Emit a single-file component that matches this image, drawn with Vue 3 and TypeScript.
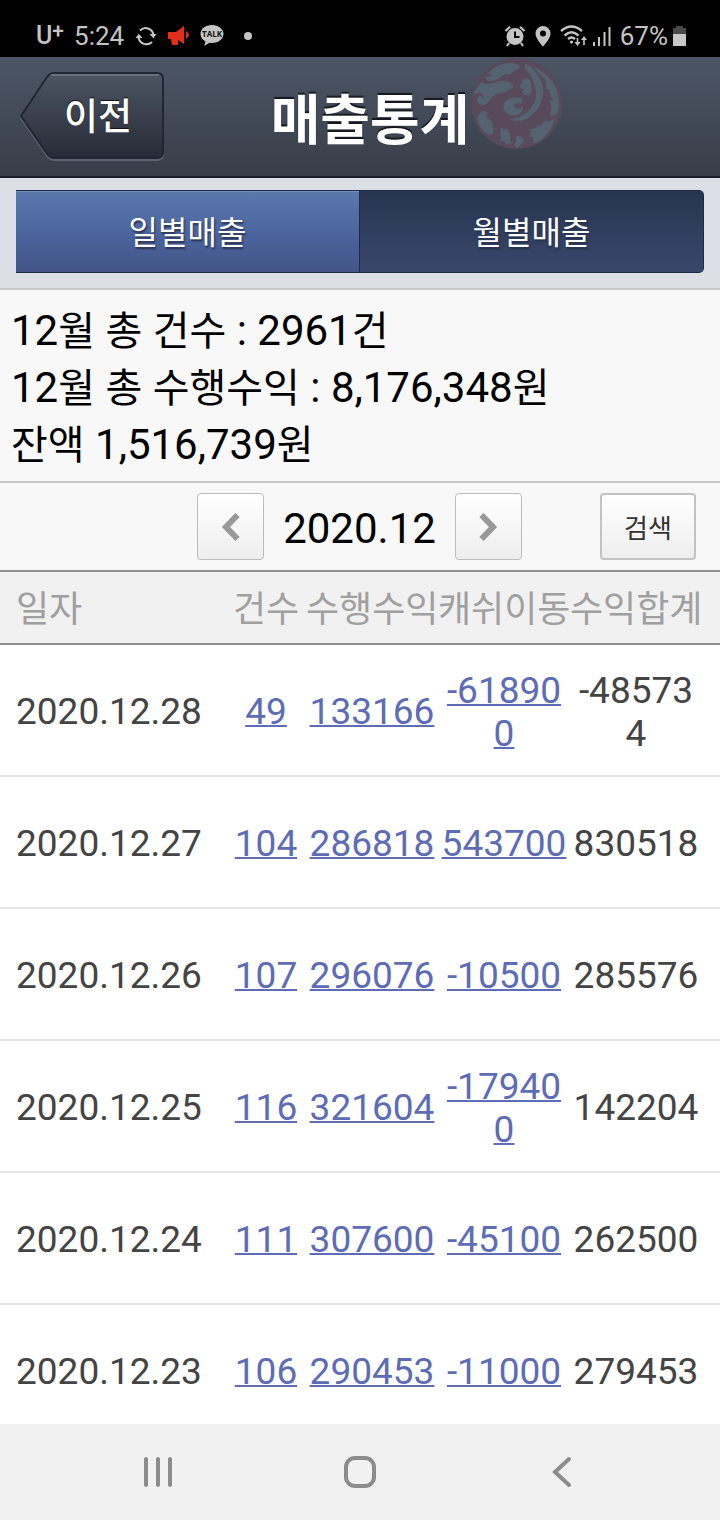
<script setup lang="ts">
import { ref } from 'vue'

interface SalesRow {
  date: string
  count: number
  profit: number
  cash: number
  total: number
}

interface Run {
  text: string
  hangul: boolean
}

const rows: SalesRow[] = [
  { date: '2020.12.28', count: 49, profit: 133166, cash: -618900, total: -485734 },
  { date: '2020.12.27', count: 104, profit: 286818, cash: 543700, total: 830518 },
  { date: '2020.12.26', count: 107, profit: 296076, cash: -10500, total: 285576 },
  { date: '2020.12.25', count: 116, profit: 321604, cash: -179400, total: 142204 },
  { date: '2020.12.24', count: 111, profit: 307600, cash: -45100, total: 262500 },
  { date: '2020.12.23', count: 106, profit: 290453, cash: -11000, total: 279453 },
]

const summary: string[] = [
  '12월 총 건수 : 2961건',
  '12월 총 수행수익 : 8,176,348원',
  '잔액 1,516,739원',
]

const tabs: string[] = ['일별매출', '월별매출']
const activeTab = ref(0)

const month = ref(new Date(2020, 11, 1))
const monthLabel = (d: Date): string =>
  `${d.getFullYear()}.${String(d.getMonth() + 1).padStart(2, '0')}`
const shiftMonth = (step: number): void => {
  month.value = new Date(month.value.getFullYear(), month.value.getMonth() + step, 1)
}

const splitRuns = (line: string): Run[] =>
  (line.match(/[가-힣]+|[^가-힣]+/g) ?? []).map((text) => ({
    text,
    hangul: /[가-힣]/.test(text),
  }))
</script>

<template>
  <div class="screen">
    <div class="status">
      <div class="status-group">
        <span class="carrier">U<span class="plus">+</span></span>
        <span class="clock">5:24</span>
        <svg class="i-sync" width="22" height="22" viewBox="0 0 22 22" fill="none" stroke="#c4c4c4" stroke-width="2">
          <path d="M5 5.5A8 8 0 0 1 18.500 9.500" />
          <path d="M17 17A8 8 0 0 1 3.500 12.500" />
          <path d="M14.500 9h7l-3.200 4.200zM.5 13h7L3.800 8.800z" fill="#c4c4c4" stroke="none" />
        </svg>
        <svg class="i-horn" width="22" height="22" viewBox="0 0 22 22" fill="#e0301a">
          <path d="M0 7h8L16 1v18l-6-4v5H4l-1-6H0z" />
          <path d="M18 6q6 4 0 8z" />
        </svg>
        <svg class="i-talk" width="24" height="24" viewBox="0 0 24 24">
          <path d="M12 1C5.500 1 .5 4.800.5 10c0 3.300 2 6 5 7.400L4.300 22l5.200-3.300c.8.200 1.600.2 2.500.2 6.500 0 11.500-3.900 11.500-8.900S18.500 1 12 1z" fill="#c4c4c4" />
          <text x="12" y="13" text-anchor="middle" class="talk-text">TALK</text>
        </svg>
        <span class="dot"></span>
      </div>
      <div class="status-group">
        <svg width="22" height="22" viewBox="0 0 22 22">
          <circle cx="11" cy="11.500" r="8.500" fill="#c4c4c4" />
          <path d="M1.500 6 6 1.800M20.500 6 16 1.800M5 18l-2 3M17 18l2 3" fill="none" stroke="#c4c4c4" stroke-width="2.200" />
          <path d="M11 6.500V12h4.500" fill="none" stroke="#000" stroke-width="2" />
        </svg>
        <svg class="i-pin" width="16" height="22" viewBox="0 0 16 22">
          <path d="M8 1a7.500 7.500 0 0 0-7.500 7.500C.5 14 8 21.500 8 21.500s7.500-7.500 7.500-13A7.500 7.500 0 0 0 8 1zm0 4.500a3 3 0 1 1 0 6 3 3 0 0 1 0-6z" fill="#c4c4c4" />
        </svg>
        <svg class="i-wifi" width="28" height="22" viewBox="0 0 28 22" fill="none" stroke="#c4c4c4" stroke-width="2.400">
          <path d="M1 6q10.500-9 21 0M4.500 10.500q7-6.500 14 0M8 14q3.500-3 7 0" />
          <circle cx="11.500" cy="17" r="1.600" fill="#c4c4c4" stroke="none" />
          <path d="M17.500 13v6M24 20v-6" stroke-width="1.600" />
          <path d="M14.500 17h6l-3 4zM21 15h6l-3-4z" fill="#c4c4c4" stroke="none" />
        </svg>
        <svg class="i-signal" width="18" height="22" viewBox="0 0 18 22" fill="#c4c4c4">
          <path d="M0 17h2v4H0zM5 12h2v9H5zM10.500 7h2v14h-2zM15.500 2h2v19h-2z" />
        </svg>
        <span class="percent">67%</span>
        <svg class="i-battery" width="14" height="22" viewBox="0 0 14 22">
          <path d="M3 1h7v2h3v6H0V3h3z" fill="#4a4a4a" />
          <path d="M0 9h13v12H0z" fill="#c8c8c8" />
        </svg>
      </div>
    </div>

    <header class="titlebar">
      <button class="back" type="button">
        <svg class="back-shape" width="146" height="92" viewBox="0 0 146 92" aria-hidden="true">
          <defs>
            <linearGradient id="backFill" x1="0" y1="0" x2="0" y2="1">
              <stop offset="0" stop-color="#4c5562" />
              <stop offset="0.5" stop-color="#3a404d" />
              <stop offset="1" stop-color="#282b37" />
            </linearGradient>
          </defs>
          <path d="M1 47 27 8Q30 4 35 4H137Q143 4 143 10V83Q143 89 137 89H35Q30 89 27 85Z" fill="none" stroke="#5a636f" stroke-width="2" />
          <path d="M1 45 27 6Q30 2 35 2H137Q143 2 143 8V81Q143 87 137 87H35Q30 87 27 83Z" fill="url(#backFill)" stroke="#202733" stroke-width="2" />
          <path d="M31 4H139" stroke="#67717d" stroke-width="2" />
        </svg>
        <span class="back-label">이전</span>
      </button>
      <h1 class="title">매출통계</h1>
      <svg class="emblem" width="94" height="92" viewBox="210 21 282 276" aria-hidden="true">
        <circle cx="353" cy="161" r="136" fill="#594a5b" />
        <g fill="#55626f">
          <path d="M262 73Q298 36 340 38Q365 43 364 54Q350 57 334 73Q313 71 302 83Q290 93 274 94Q258 90 258 79Q272 84 278 77Q276 67 262 73Z" />
          <path d="M249 96Q269 108 294 96Q313 87 337 99Q347 104 340 113Q319 129 293 131Q275 142 265 159Q252 170 237 160Q230 146 240 137Q250 136 250 147Q257 138 247 129Q234 125 223 137Q228 115 249 96Z" />
          <path d="M369 91Q389 77 397 101Q400 120 393 133Q384 142 370 130Q364 124 376 119Q365 116 362 108Q372 103 369 91Z" />
          <path d="M380 41Q406 53 418 79Q439 110 430 146Q419 185 383 207Q357 218 330 209Q370 203 394 178Q419 145 408 111Q399 72 374 52Z" />
          <path d="M403 49Q450 71 471 113Q485 147 478 184Q470 202 452 196Q463 176 451 152L463 149Q449 132 452 119L440 116Q447 88 424 76Z" />
          <path d="M318 155Q335 138 363 143Q378 150 365 161Q346 157 345 169Q352 180 371 170Q375 183 358 194Q329 204 316 181Q311 166 318 155Z" />
          <path d="M247 185Q265 178 266 194Q258 203 273 209Q286 224 282 251Q265 259 252 240Q236 223 235 202Z" />
          <path d="M305 232Q313 241 323 235Q336 251 334 270L340 280L323 283L313 272L301 276Q309 260 303 247Z" />
          <path d="M351 262Q355 255 369 260Q378 272 365 284L354 294L344 285Q355 276 351 262Z" />
          <path d="M391 239Q421 231 438 212Q446 218 468 205Q455 251 420 273Q409 281 401 278Q409 263 391 258Q400 249 391 239Z" />
        </g>
        <path d="M327 80q6 1 5 7-4 5-9 0 0-5 4-7" fill="none" stroke="#594a5b" stroke-width="3" />
      </svg>
    </header>

    <main class="content">
      <nav class="tabs" aria-label="매출 구분">
        <button
          v-for="(tab, i) in tabs"
          :key="tab"
          type="button"
          class="tab"
          :class="{ active: activeTab === i }"
          @click="activeTab = i"
        >{{ tab }}</button>
      </nav>

      <section class="summary">
        <p v-for="line in summary" :key="line" class="summary-line"><span v-for="(run, i) in splitRuns(line)" :key="i" :class="{ hangul: run.hangul }">{{ run.text }}</span></p>
      </section>

      <section class="picker">
        <div class="stepper">
          <button type="button" class="step" aria-label="이전 달" @click="shiftMonth(-1)">
            <svg width="20" height="30" viewBox="0 0 20 30"><path d="M16.500 3 5 15l11.500 12" fill="none" stroke="#999" stroke-width="6" /></svg>
          </button>
          <span class="month">{{ monthLabel(month) }}</span>
          <button type="button" class="step" aria-label="다음 달" @click="shiftMonth(1)">
            <svg width="20" height="30" viewBox="0 0 20 30"><path d="M3.500 3 15 15 3.500 27" fill="none" stroke="#999" stroke-width="6" /></svg>
          </button>
        </div>
        <button type="button" class="search">검색</button>
      </section>

      <table class="sales">
        <colgroup>
          <col />
          <col class="col-count" />
          <col class="col-money" />
          <col class="col-money" />
          <col class="col-last" />
        </colgroup>
        <thead>
          <tr>
            <th scope="col">일자</th>
            <th scope="col">건수</th>
            <th scope="col">수행수익</th>
            <th scope="col">캐쉬이동</th>
            <th scope="col">수익합계</th>
          </tr>
        </thead>
        <tbody>
          <tr v-for="row in rows" :key="row.date">
            <td>{{ row.date }}</td>
            <td><a href="#">{{ row.count }}</a></td>
            <td><a href="#">{{ row.profit }}</a></td>
            <td><a href="#">{{ row.cash }}</a></td>
            <td>{{ row.total }}</td>
          </tr>
        </tbody>
      </table>
    </main>

    <nav class="softkeys" aria-label="시스템">
      <button type="button" class="key" aria-label="최근 앱">
        <svg width="32" height="32" viewBox="0 0 32 32"><path d="M4 3v26M16 3v26M28 3v26" stroke="#8c8c8c" stroke-width="4" stroke-linecap="round" /></svg>
      </button>
      <button type="button" class="key" aria-label="홈">
        <svg width="32" height="32" viewBox="0 0 32 32"><rect x="2" y="2" width="28" height="28" rx="9" fill="none" stroke="#8c8c8c" stroke-width="4" /></svg>
      </button>
      <button type="button" class="key" aria-label="뒤로">
        <svg width="32" height="32" viewBox="0 0 32 32"><path d="M23 3 9 16l14 13" fill="none" stroke="#8c8c8c" stroke-width="4" stroke-linecap="round" /></svg>
      </button>
    </nav>
  </div>
</template>

<style>
body {
  margin: 0;
  background: #fff;
}
</style>

<style scoped>
* {
  box-sizing: border-box;
}

.screen {
  display: flex;
  flex-direction: column;
  height: 100vh;
  overflow: hidden;
  font-family: Roboto, "Noto Sans CJK KR", sans-serif;
  color: #444;
}

button {
  font-family: inherit;
  padding: 0;
  cursor: pointer;
}

svg {
  display: block;
  flex: none;
}

.status {
  display: flex;
  justify-content: space-between;
  flex: none;
  height: 57px;
  padding: 14px 33px 0 36px;
  background: #000;
  color: #c4c4c4;
  font-size: 26px;
  line-height: 44px;
}

.status-group {
  display: flex;
  align-items: center;
}

.carrier {
  font-size: 25px;
  font-weight: 500;
}

.plus {
  font-size: 21px;
  font-weight: 500;
  vertical-align: 6px;
  line-height: 1;
}

.clock {
  margin-left: 10px;
}

.i-sync {
  margin-left: 11px;
}

.i-horn {
  margin-left: 11px;
}

.i-talk {
  margin-left: 10px;
}

.talk-text {
  font: 700 8px "Open Sans", sans-serif;
  fill: #111;
}

.dot {
  width: 8px;
  height: 8px;
  margin-left: 20px;
  border-radius: 50%;
  background: #c4c4c4;
}

.i-pin {
  margin-left: 9px;
}

.i-wifi {
  margin-left: 9px;
}

.i-signal {
  margin-left: 5px;
}

.percent {
  margin-left: 9px;
}

.i-battery {
  margin-left: 5px;
}

.titlebar {
  display: grid;
  grid-template-columns: 1fr auto 1fr;
  align-items: center;
  flex: none;
  height: 121px;
  padding-left: 20px;
  border-bottom: 2px solid #1c1d28;
  background: linear-gradient(#4c5565, #424a57 50%, #373d48);
}

.back {
  position: relative;
  width: 146px;
  height: 92px;
  border: 0;
  background: none;
}

.back-shape {
  position: absolute;
  inset: 0;
}

.back-label {
  position: relative;
  display: block;
  padding: 2px 0 0 10px;
  color: #fff;
  font-size: 37px;
  font-weight: 500;
  line-height: 54px;
  text-shadow: 0 -1px 1px #111;
}

.title {
  margin: 0;
  padding-top: 10px;
  color: #fff;
  font-size: 54px;
  font-weight: 700;
  line-height: 80px;
  text-shadow: 0 -2px 1px #15181f;
}

.emblem {
  align-self: start;
}

.content {
  flex: 1;
  min-height: 0;
  overflow-y: auto;
  scrollbar-width: none;
}

.tabs {
  display: flex;
  height: 112px;
  padding: 12px 16px 15px;
  border-bottom: 2px solid #c8c8c8;
  background: #dce0e6;
}

.tab {
  flex: 1;
  height: 83px;
  padding-bottom: 4px;
  border: 1px solid #1e2b47;
  border-left: 0;
  background: linear-gradient(#27344f, #39476c);
  color: #fff;
  font-size: 32px;
  font-weight: 400;
  text-shadow: 1px 2px 2px #26304d;
}

.tab.active {
  background: linear-gradient(#5b78ad, #4b649d 55%, #425488);
  box-shadow: inset 0 1px #7590bd;
}

.tab:last-child {
  border-radius: 0 5px 5px 0;
}

.summary {
  padding: 12px 11px 8px;
  border-bottom: 2px solid #c6c6c6;
  background: #f8f8f8;
  color: #000;
}

.summary-line {
  margin: 0;
  font-size: 42px;
  line-height: 57px;
  white-space: pre-wrap;
}

.hangul {
  font-size: 40px;
  line-height: 1;
}

.picker {
  display: grid;
  grid-template-columns: 1fr auto 1fr;
  align-items: center;
  height: 89px;
  padding: 0 24px 0 23px;
  border-bottom: 2px solid #909090;
  background: #f8f8f8;
}

.stepper {
  display: flex;
  align-items: center;
  gap: 19px;
  grid-column: 2;
}

.step {
  display: flex;
  align-items: center;
  justify-content: center;
  width: 67px;
  height: 67px;
  border: 1px solid #bcbcbc;
  border-radius: 4px;
  background: linear-gradient(#fff, #eee);
}

.month {
  padding-top: 4px;
  color: #000;
  font-size: 42px;
  line-height: 56px;
}

.search {
  justify-self: end;
  width: 96px;
  height: 67px;
  border: 2px solid #c3c3c3;
  border-radius: 4px;
  background: linear-gradient(#fff, #eee);
  color: #333;
  font-size: 26px;
}

.sales {
  width: 100%;
  table-layout: fixed;
  border-collapse: separate;
  border-spacing: 0;
  font-size: 37px;
  line-height: 43px;
}

.col-count {
  width: 80px;
}

.col-money {
  width: 132px;
}

.col-last {
  width: 150px;
}

th,
td {
  padding: 0;
  text-align: center;
  vertical-align: middle;
}

th:first-child,
td:first-child {
  padding-left: 16px;
  text-align: left;
}

th:last-child,
td:last-child {
  padding-right: 18px;
}

th {
  height: 73px;
  padding-top: 6px;
  border-bottom: 2px solid #909090;
  background: #f1f1f1;
  color: #a0a0a0;
  font-size: 36px;
  font-weight: 400;
  white-space: nowrap;
}

td {
  height: 132px;
  padding-top: 3px;
  border-bottom: 2px solid #e6e6e6;
  background: #fff;
  word-break: break-all;
}

a {
  color: #5d6cb5;
  text-decoration: underline;
  text-decoration-thickness: 2px;
}

.softkeys {
  display: flex;
  justify-content: space-around;
  align-items: center;
  flex: none;
  height: 96px;
  padding: 0 57px;
  background: #f1f1f1;
}

.key {
  display: flex;
  align-items: center;
  justify-content: center;
  flex: 1;
  height: 96px;
  border: 0;
  background: none;
}
</style>
